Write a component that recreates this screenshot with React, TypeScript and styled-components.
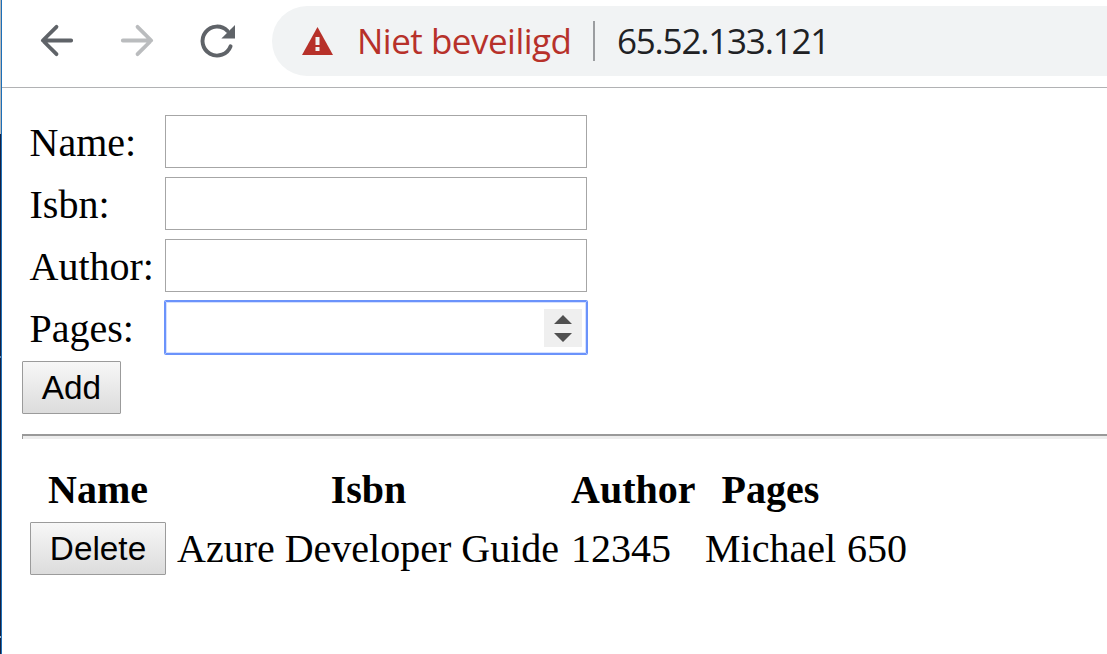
import React from "react";
import styled, { createGlobalStyle } from "styled-components";

const GlobalStyle = createGlobalStyle`
  * { box-sizing: border-box; }
  body { margin: 0; background: #fff; overflow: hidden; }
`;

const Screen = styled.div`
  display: flex;
  width: 1107px;
  height: 654px;
  overflow: hidden;
`;

const WindowEdge = styled.div`
  flex: none;
  width: 2px;
  border-right: 1px solid #1c6fb8;
  background: linear-gradient(
    #b9b9b9 0 134px, #17203f 134px 356px, #6f86a8 356px 358px,
    #17203f 358px 636px, #a9b3c4 636px 638px, #17203f 638px
  );
`;

const Browser = styled.div`
  flex: 1;
  min-width: 0;
  display: flex;
  flex-direction: column;
`;

const Toolbar = styled.header`
  flex: none;
  display: flex;
  height: 88px;
  padding-top: 6px;
  border-bottom: 1px solid #b1b2b4;
`;

const NavButtons = styled.nav`
  flex: none;
  width: 270px;
  padding: 14px 0 0 34px;
  display: flex;
  gap: 40px;
  svg { display: block; width: 40px; height: 40px; }
`;

const AddressBar = styled.div`
  flex: 1;
  display: flex;
  align-items: center;
  height: 70px;
  padding-left: 30px;
  background: #f1f3f4;
  border-radius: 35px 0 0 35px;
  font: 35px/48px "Open Sans", sans-serif;
  white-space: nowrap;
`;

const Warning = styled.span`
  width: 214px;
  margin-left: 24px;
  color: #b7312a;
  letter-spacing: -0.5px;
`;

const Separator = styled.span`
  width: 2px;
  height: 40px;
  margin: 0 22px 0 22px;
  background: #9b9da0;
`;

const Address = styled.span`
  color: #202124;
  letter-spacing: -1.2px;
`;

const Page = styled.main`
  padding: 27px 0 0 20px;
  font: 40px/46px "Liberation Serif", serif;
  color: #000;
`;

const Form = styled.form`
  display: flex;
  flex-direction: column;
  align-items: flex-start;
`;

const Field = styled.label`
  display: grid;
  grid-template-columns: 135.5px 422px;
  height: 53px;
  margin: 0 0 9px 7.5px;
  align-items: center;
`;

const FieldName = styled.span`
  padding-top: 2px;
`;

const Input = styled.div<{ $focused?: boolean }>`
  display: flex;
  justify-content: flex-end;
  align-items: center;
  height: 53px;
  padding-right: 4px;
  border: 1px solid ${(p) => (p.$focused ? "#6b93fb" : "#a6a6a6")};
  border-radius: ${(p) => (p.$focused ? "1px" : "0")};
  box-shadow: ${(p) => (p.$focused ? "0 0 0 1px #6b93fb, inset 0 0 0 1px #d5e0fe" : "none")};
`;

const Spinner = styled.svg`
  width: 38px;
  height: 38px;
  background: #efefef;
`;

const Button = styled.button<{ $width: number }>`
  display: block;
  width: ${(p) => p.$width}px;
  height: 53px;
  padding: 0;
  border: 1px solid #9b9b9b;
  border-radius: 1px;
  background: linear-gradient(#f7f7f7, #dcdcdc);
  color: #000;
  font: 33.33px/51px "Liberation Sans", sans-serif;
`;

const AddButton = styled(Button)`
  margin-top: -2px;
`;

const Rule = styled.div`
  height: 5px;
  margin-top: 20px;
  border-top: 2px solid #999;
  border-left: 1px solid #999;
  background: #ededed;
`;

const BookGrid = styled.div`
  display: grid;
  grid-template-columns: 136px 383px 123px 131px 60px;
  column-gap: 11px;
  grid-template-rows: 53px 53px;
  row-gap: 5px;
  margin: 25px 0 0 8px;
  align-items: center;
  white-space: nowrap;
`;

const Heading = styled.div`
  padding-bottom: 2px;
  font-weight: bold;
  text-align: center;
`;

const Cell = styled.div``;

const fields = ["Name:", "Isbn:", "Author:"];

export default function App() {
  return (
    <>
      <GlobalStyle />
      <Screen>
        <WindowEdge />
        <Browser>
          <Toolbar>
            <NavButtons>
              <svg viewBox="0 0 40 40" fill="none" stroke="#5f6368" strokeWidth="3.8" strokeLinecap="round" strokeLinejoin="round">
                <path d="M35.200 20.500H7M20.500 6.800L6.800 20.500L20.500 34.200" />
              </svg>
              <svg viewBox="0 0 40 40" fill="none" stroke="#babcbe" strokeWidth="3.8" strokeLinecap="round" strokeLinejoin="round">
                <path d="M6.800 20.500H35M21.500 6.800L35.200 20.500L21.500 34.200" />
              </svg>
              <svg viewBox="0 0 40 40" fill="none">
                <path d="M34.600 26.200A14.500 14.500 0 1 1 31.400 10.900" stroke="#5f6368" strokeWidth="3.900" strokeLinecap="round" />
                <path d="M39 5V18.600H25.400Z" fill="#5f6368" />
              </svg>
            </NavButtons>
            <AddressBar>
              <svg width="31" height="28" viewBox="0 0 31 28">
                <path d="M15.500 0L31 28H0Z" fill="#b7312a" />
                <path d="M13.500 10h4v8h-4zM13.500 20h4v4h-4z" fill="#f1f3f4" />
              </svg>
              <Warning>Niet beveiligd</Warning>
              <Separator />
              <Address>65.52.133.121</Address>
            </AddressBar>
          </Toolbar>
          <Page>
            <Form>
              {fields.map((name) => (
                <Field key={name}>
                  <FieldName>{name}</FieldName>
                  <Input />
                </Field>
              ))}
              <Field>
                <FieldName>Pages:</FieldName>
                <Input $focused>
                  <Spinner viewBox="0 0 38 38" fill="#505050">
                    <path d="M10 15L19 6L28 15ZM10 24H28L19 33Z" />
                  </Spinner>
                </Input>
              </Field>
              <AddButton type="button" $width={99}>Add</AddButton>
            </Form>
            <Rule />
            <BookGrid>
              <Heading>Name</Heading>
              <Heading>Isbn</Heading>
              <Heading>Author</Heading>
              <Heading>Pages</Heading>
              <Cell />
              <Button type="button" $width={136}>Delete</Button>
              <Cell>Azure Developer Guide</Cell>
              <Cell>12345</Cell>
              <Cell>Michael</Cell>
              <Cell>650</Cell>
            </BookGrid>
          </Page>
        </Browser>
      </Screen>
    </>
  );
}
